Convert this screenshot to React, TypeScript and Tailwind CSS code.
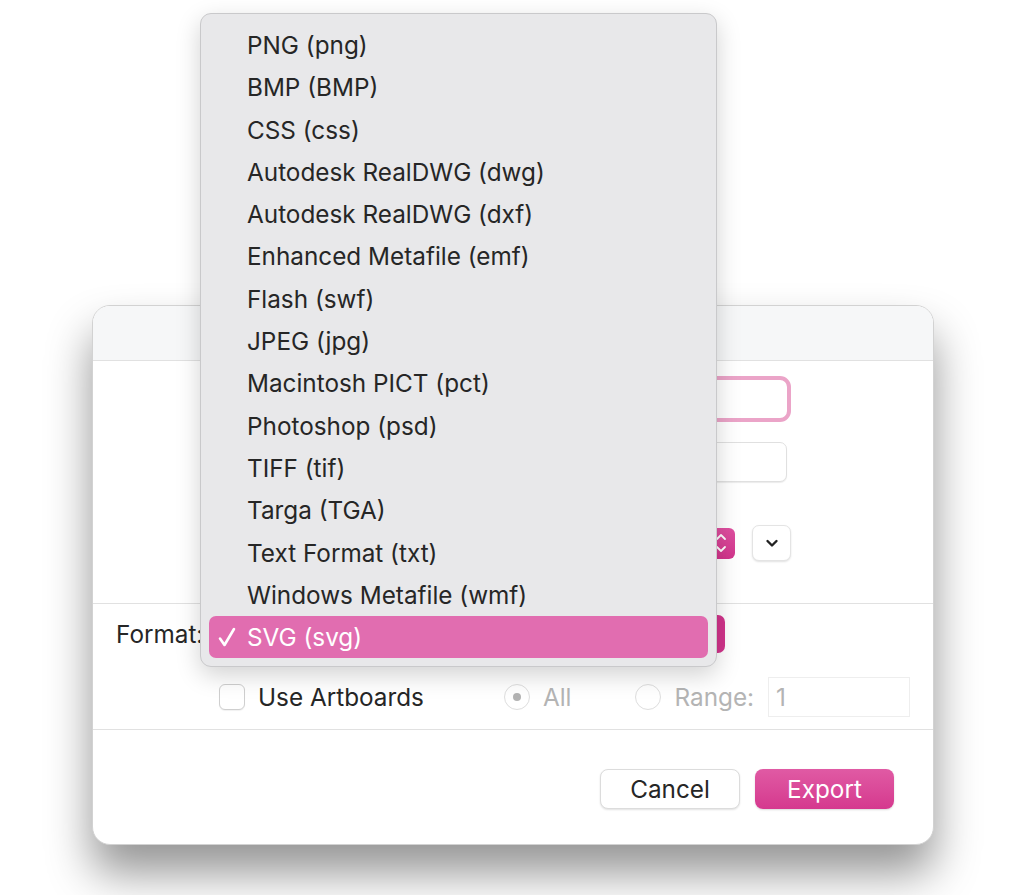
import React from 'react';

const formats = [
  'PNG (png)',
  'BMP (BMP)',
  'CSS (css)',
  'Autodesk RealDWG (dwg)',
  'Autodesk RealDWG (dxf)',
  'Enhanced Metafile (emf)',
  'Flash (swf)',
  'JPEG (jpg)',
  'Macintosh PICT (pct)',
  'Photoshop (psd)',
  'TIFF (tif)',
  'Targa (TGA)',
  'Text Format (txt)',
  'Windows Metafile (wmf)',
];

const Check = () => (
  <svg width="18" height="20" viewBox="0 0 18 20" fill="none">
    <path d="M2 11.5 L6.5 18 L16 2" stroke="white" strokeWidth="2.6" strokeLinecap="round" strokeLinejoin="round" />
  </svg>
);

const FormatMenu = () => (
  <div className="absolute left-[200px] top-[13px] w-[517px] rounded-[11px] border border-[#c9c9cb] bg-[#e8e8ea] pt-[10px] pb-[8px] shadow-[0_8px_24px_rgba(0,0,0,0.18)]">
    {formats.map(name => (
      <div key={name} className="flex h-[42.3px] items-center pl-[46px] text-[#262626]">
        {name}
      </div>
    ))}
    <div className="mx-[8px] flex h-[42.3px] items-center rounded-[7px] bg-[#e16db0] pl-[9px] text-white">
      <span className="w-[29px]">
        <Check />
      </span>
      SVG (svg)
    </div>
  </div>
);

const ExportDialog = () => (
  <div className="ml-[92px] mt-[305px] flex h-[540px] w-[842px] flex-col overflow-hidden rounded-[18px] border border-[#d2d2d2] bg-white shadow-[0_28px_45px_rgba(0,0,0,0.42)]">
    <div className="h-[55px] shrink-0 border-b border-[#e1e1e1] bg-[#f6f7f8]" />

    {/* fields hidden under the menu */}
    <div className="flex h-[242px] shrink-0 flex-col items-end pr-[142px]">
      <div className="mt-[15px] h-[46px] w-[480px] rounded-[11px] border-[4px] border-[#eba4c8] bg-white" />
      <div className="mr-[4px] mt-[20px] h-[40px] w-[470px] rounded-[7px] border border-[#e0e0e0] bg-white shadow-[0_1px_1px_rgba(0,0,0,0.08)]" />
      <div className="mt-[43px] flex items-center gap-[17px]">
        <div className="flex h-[31px] w-[28px] flex-col items-center justify-center rounded-[6px] bg-gradient-to-b from-[#df4fa0] to-[#d2348c]">
          <svg width="12" height="22" viewBox="0 0 12 22" fill="none">
            <path d="M2 7 L6 3 L10 7 M2 15 L6 19 L10 15" stroke="white" strokeWidth="1.8" strokeLinecap="round" strokeLinejoin="round" />
          </svg>
        </div>
        <div className="flex h-[36px] w-[39px] items-center justify-center rounded-[7px] border border-[#e4e4e4] bg-white shadow-[0_1px_2px_rgba(0,0,0,0.12)]">
          <svg width="14" height="10" viewBox="0 0 14 10" fill="none">
            <path d="M2.5 3 L7 7.5 L11.5 3" stroke="#222" strokeWidth="2.4" strokeLinecap="round" strokeLinejoin="round" />
          </svg>
        </div>
      </div>
    </div>

    <div className="flex h-[126px] shrink-0 flex-col border-t border-[#e1e1e1]">
      <div className="mt-[11px] flex h-[38px] items-center pl-[23px] pr-[208px]">
        <span className="text-[#262626]">Format:</span>
        <div className="ml-auto h-[38px] w-[480px] rounded-[7px] bg-[#d2348c]" />
      </div>
      <div className="mt-[24px] flex items-center">
        <div className="ml-[126px] h-[26px] w-[26px] rounded-[6px] border border-[#cfcfcf] bg-white shadow-[0_1px_1px_rgba(0,0,0,0.06)]" />
        <span className="ml-[13px] text-[#262626]">Use Artboards</span>
        <div className="ml-[80px] flex h-[26px] w-[26px] items-center justify-center rounded-full border border-[#dedede] bg-white">
          <div className="h-[8px] w-[8px] rounded-full bg-[#b3b3b3]" />
        </div>
        <span className="ml-[13px] text-[#b4b4b4]">All</span>
        <div className="ml-[64px] h-[26px] w-[26px] rounded-full border border-[#dedede] bg-white" />
        <span className="ml-[13px] text-[#b4b4b4]">Range:</span>
        <div className="ml-[14px] flex h-[40px] w-[142px] items-center border border-[#eeeeee] pl-[7px] text-[#b4b4b4]">1</div>
      </div>
    </div>

    <div className="flex flex-1 items-start justify-end gap-[15px] border-t border-[#e1e1e1] pr-[39px] pt-[39px]">
      <button className="h-[40px] w-[140px] rounded-[8px] border border-[#dcdcdc] bg-white text-[#262626] shadow-[0_1px_2px_rgba(0,0,0,0.12)]">
        Cancel
      </button>
      <button className="h-[40px] w-[139px] rounded-[8px] bg-gradient-to-b from-[#e05aa4] to-[#d5388e] text-white shadow-[0_1px_2px_rgba(0,0,0,0.15)]">
        Export
      </button>
    </div>
  </div>
);

export default function App() {
  return (
    <div className="relative h-[895px] w-[1024px] overflow-hidden bg-white text-[24.3px] font-['Inter',sans-serif] leading-none">
      <ExportDialog />
      <FormatMenu />
    </div>
  );
}
